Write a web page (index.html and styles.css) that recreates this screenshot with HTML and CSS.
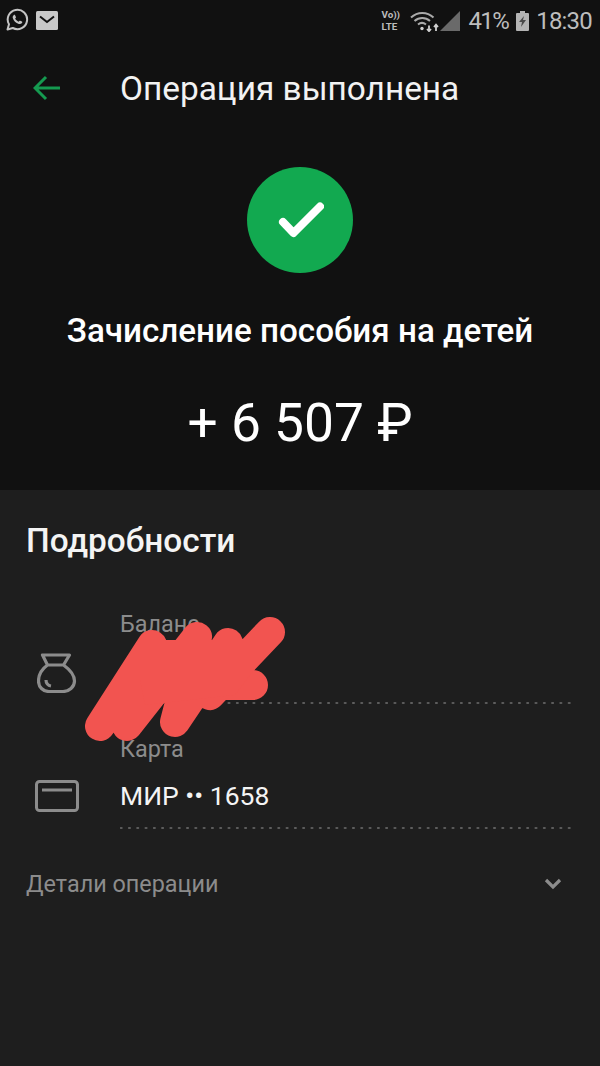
FILE: index.html
```html
<!DOCTYPE html>
<html lang="ru">
<head>
<meta charset="utf-8">
<title>Операция выполнена</title>
<link rel="stylesheet" href="styles.css">
</head>
<body>
<div class="screen">
  <section class="top">
    <div class="status">
      <div class="status-left">
        <svg class="ic-wa" viewBox="0 0 24 24"><path d="M2.500 21.500l1.500-5.200A9.700 9.700 0 1 1 7.800 20z" fill="none" stroke="#c4c4c4" stroke-width="2" stroke-linejoin="round"/><path d="M8.600 7.200c.5-.5 1.200-.5 1.500.1l.8 1.600c.2.4 0 .7-.2 1l-.6.7c.7 1.400 1.900 2.500 3.400 3.200l.8-.9c.3-.3.6-.3 1-.2l1.600.8c.5.3.5 1 .1 1.500-.8 1-2 1.300-3.200.9-3-.9-5.200-3-6-5.900-.3-1 0-2 .8-2.800z" fill="#c4c4c4"/></svg>
        <svg class="ic-mail" viewBox="0 0 22 19"><rect width="22" height="19" rx="1.500" fill="#c8c8c8"/><path d="M4 5.500l7 5.500 7-5.500" fill="none" stroke="#111" stroke-width="2"/></svg>
      </div>
      <div class="status-right">
        <span class="volte"><span>Vo))</span><span>LTE</span></span>
        <svg class="ic-wifi" viewBox="0 0 30 22"><path d="M1 7.500c6.500-6 16-6 22.500 0M4.500 11c4.500-4 11-4 15.500 0M8 14.500c2.500-2 5.500-2 8 0" fill="none" stroke="#aaa" stroke-width="2"/><circle cx="12" cy="18.500" r="1.700" fill="#d0d0d0"/><path d="M19 15.500v5.500M17 19l2 2.200 2-2.200M26 21v-6M24 17l2-2.300 2 2.300" fill="none" stroke="#d0d0d0" stroke-width="1.800"/></svg>
        <svg class="ic-signal" viewBox="0 0 20 20"><path d="M0 20L20 0v20z" fill="#6a6a6a"/></svg>
        <span class="pct">41%</span>
        <svg class="ic-batt" viewBox="0 0 13 20"><path d="M4 0h5v2h3a1 1 0 0 1 1 1v16a1 1 0 0 1-1 1H1a1 1 0 0 1-1-1V3a1 1 0 0 1 1-1h3z" fill="#b4b4b4"/><path d="M8 5L3 11h3l-1 5 5-7H7z" fill="#4a4a4a"/></svg>
        <span class="time">18:30</span>
      </div>
    </div>
    <header class="bar">
      <svg class="ic-back" viewBox="0 0 28 26"><path d="M27 13H3M13 2L2 13l11 11" fill="none" stroke="#159a50" stroke-width="3"/></svg>
      <h1 class="title">Операция выполнена</h1>
    </header>
    <div class="badge">
      <svg class="ic-check" viewBox="0 0 48 36"><path d="M7 20l10.500 11L44 4.500" fill="none" stroke="#fff" stroke-width="8" stroke-linecap="round" stroke-linejoin="round"/></svg>
    </div>
    <h2 class="subject">Зачисление пособия на детей</h2>
    <div class="amount">+ 6 507 ₽</div>
  </section>
  <section class="panel">
    <h3 class="panel-title">Подробности</h3>
    <div class="row">
      <div class="row-icon">
        <svg class="ic-bag" viewBox="0 0 40 40"><path d="M5.500 2H32.500L26.500 12H10.500zM10.500 12C5 16 1.500 22 1.500 28 1.500 34 6 38.500 12 38.500H26C32 38.500 37.500 34 37.500 28 37.500 22 32 16 26.500 12M9 27c0 3 2 5.500 5 6" fill="none" stroke="#8c8c8c" stroke-width="3.200" stroke-linejoin="round"/></svg>
      </div>
      <div class="row-body">
        <div class="label">Баланс</div>
        <div class="value">&nbsp;</div>
      </div>
    </div>
    <div class="row">
      <div class="row-icon">
        <svg class="ic-card" viewBox="0 0 44 32"><rect x="1.500" y="1.500" width="41" height="29" rx="3" fill="none" stroke="#8c8c8c" stroke-width="3"/><path d="M7 10h30" stroke="#8c8c8c" stroke-width="3"/></svg>
      </div>
      <div class="row-body">
        <div class="label">Карта</div>
        <div class="value">МИР •• 1658</div>
      </div>
    </div>
    <div class="details">
      <span class="details-text">Детали операции</span>
      <svg class="ic-chev" viewBox="0 0 18 12"><path d="M2 2l7 7 7-7" fill="none" stroke="#8c8c8c" stroke-width="3.200"/></svg>
    </div>
    <svg class="scribble" viewBox="0 0 200 130"><path d="M15 111L67 30 42 111 112 22 90 107 143 28 125 80 185 17M168 70H80" fill="none" stroke="#f25450" stroke-width="30" stroke-linecap="round" stroke-linejoin="round"/><path d="M55 65L75 25 150 25 180 40 150 80 60 90z" fill="#f25450"/></svg>
  </section>
</div>
</body>
</html>
```
FILE: styles.css
```css
* { box-sizing: border-box; }
html, body { margin: 0; padding: 0; background: #1e1e1e; }
.screen {
  width: 600px;
  height: 1066px;
  display: flex;
  flex-direction: column;
  font-family: Roboto, "Noto Sans", sans-serif;
  overflow: hidden;
}
.top {
  height: 490px;
  background: #111;
  display: flex;
  flex-direction: column;
  align-items: center;
}
.status {
  width: 100%;
  height: 40px;
  padding: 8px 8px 0 5px;
  display: flex;
  justify-content: space-between;
  align-items: flex-start;
}
.status-left { display: flex; align-items: center; gap: 7px; height: 24px; }
.ic-wa { width: 24px; height: 24px; }
.ic-mail { width: 22px; height: 19px; }
.status-right { display: flex; align-items: center; height: 26px; color: #bdbdbd; }
.volte {
  display: flex;
  flex-direction: column;
  font-size: 9.800px;
  font-weight: 700;
  line-height: 11.600px;
  width: 20px;
  margin-right: 9px;
}
.ic-wifi { width: 30px; height: 22px; margin-right: 0; }
.ic-signal { width: 20px; height: 20px; margin-right: 8px; }
.pct { font-size: 24px; line-height: 26px; letter-spacing: -1.600px; margin-right: 8px; }
.ic-batt { width: 13px; height: 20px; margin-right: 7px; }
.time { font-size: 24px; line-height: 26px; letter-spacing: -.800px; }
.bar {
  width: 100%;
  height: 96px;
  padding: 0 0 0 33px;
  display: flex;
  align-items: center;
}
.ic-back { width: 28px; height: 26px; margin-right: 59px; }
.title { margin: 0; font-size: 33.400px; font-weight: 400; color: #f2f2f2; }
.badge {
  width: 106px;
  height: 106px;
  margin-top: 31px;
  border-radius: 50%;
  background: #12a950;
  display: flex;
  align-items: center;
  justify-content: center;
}
.ic-check { width: 48px; height: 36px; }
.subject { margin: 40px 0 0; font-size: 33.200px; line-height: 36px; font-weight: 500; color: #fff; }
.amount { margin-top: 44px; font-size: 53.300px; line-height: 60px; color: #fff; }
.panel {
  position: relative;
  flex: 1;
  background: #1e1e1e;
  padding: 32px 27px 0 26px;
}
.panel-title { margin: 0 0 20px; font-size: 33.400px; line-height: 38px; font-weight: 500; color: #f4f4f4; }
.row {
  display: flex;
  align-items: flex-end;
  height: 125px;
}
.row-icon {
  flex: none;
  width: 94px;
  display: flex;
}
.ic-bag { width: 40px; height: 40px; margin: 0 0 12px 11px; }
.ic-card { width: 44px; height: 32px; margin: 0 0 18px 9px; }
.row-body {
  flex: 1;
  align-self: stretch;
  padding-top: 28px;
  background: radial-gradient(circle, #5e5e5e 1px, transparent 1.300px) -3px bottom / 8.300px 4px repeat-x;
}
.label { font-size: 23.400px; line-height: 32px; color: #8c8c8c; }
.value { margin-top: 15px; font-size: 26.500px; line-height: 32px; color: #f4f4f4; }
.details {
  height: 56px;
  margin-top: 26px;
  padding-right: 11px;
  display: flex;
  align-items: center;
  justify-content: space-between;
}
.details-text { font-size: 23.400px; color: #8c8c8c; }
.ic-chev { width: 18px; height: 12px; }
.scribble { position: absolute; left: 85px; top: 125px; width: 200px; height: 130px; }
```
